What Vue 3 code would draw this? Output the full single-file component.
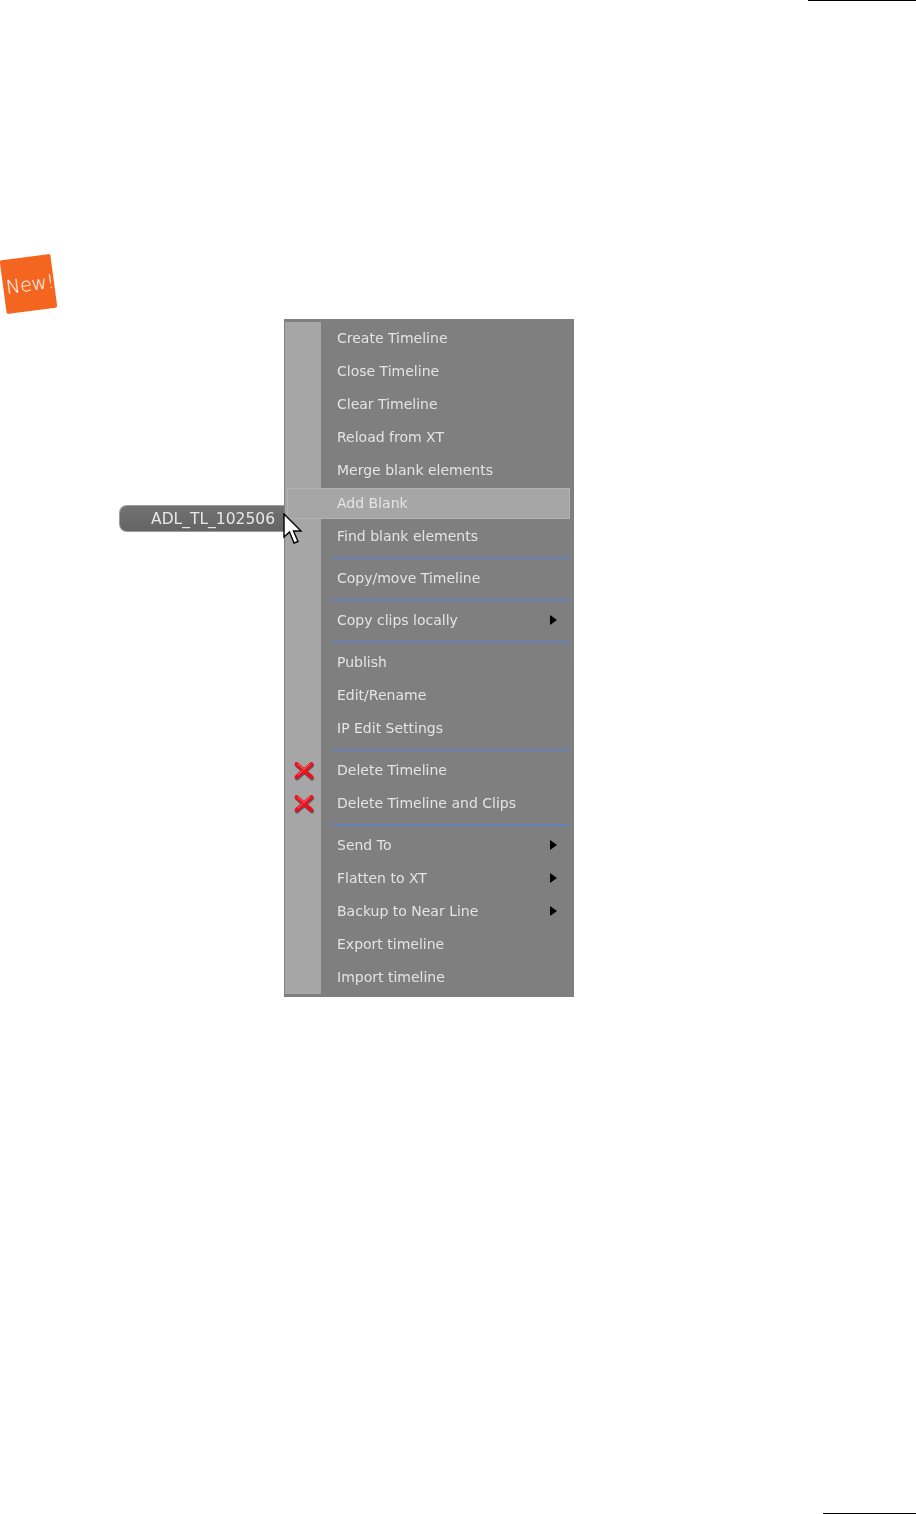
<template>
  <div class="page">
    <div class="rule rule-top"></div>

    <div class="new-badge"><span>New!</span></div>

    <div class="figure">
      <div class="timeline-pill">ADL_TL_102506</div>

      <div class="menu">
        <template v-for="(item, i) in menuItems" :key="i">
          <div v-if="item.sep" class="sep">
            <div class="gutter"></div>
            <div class="sep-line"></div>
          </div>
          <div v-else class="row" :class="{ active: item.active }">
            <div class="gutter">
              <svg v-if="item.del" class="del-icon" viewBox="0 0 22 20" width="22" height="20">
                <path d="M3.5 3.5 L18.5 16.5 M18.5 3.5 L3.5 16.5" stroke="#5c5860" stroke-width="4" stroke-linecap="round" transform="translate(0.5 1)"/>
                <path d="M3.5 3 L18.5 16 M18.5 3 L3.5 16" stroke="#ee0f1c" stroke-width="4" stroke-linecap="round"/>
                <path d="M5 3.4 L11 8.6 L17 3.2 M9.4 10 L5 14" stroke="#ff6a70" stroke-width="1" stroke-linecap="round" fill="none"/>
              </svg>
            </div>
            <div class="label">
              <span>{{ item.label }}</span>
              <i v-if="item.sub" class="arrow"></i>
            </div>
          </div>
        </template>
      </div>

      <svg class="cursor" viewBox="0 0 20 32" width="20" height="32">
        <path d="M1 1 L1 24 L6.5 19 L11 30 L15 28.5 L10.5 18 L18 18 Z" fill="#fff" stroke="#000" stroke-width="1.4" stroke-linejoin="miter"/>
      </svg>
    </div>

    <div class="rule rule-bottom"></div>
  </div>
</template>

<script setup>
const menuItems = [
  { label: 'Create Timeline' },
  { label: 'Close Timeline' },
  { label: 'Clear Timeline' },
  { label: 'Reload from XT' },
  { label: 'Merge blank elements' },
  { label: 'Add Blank', active: true },
  { label: 'Find blank elements' },
  { sep: true },
  { label: 'Copy/move Timeline' },
  { sep: true },
  { label: 'Copy clips locally', sub: true },
  { sep: true },
  { label: 'Publish' },
  { label: 'Edit/Rename' },
  { label: 'IP Edit Settings' },
  { sep: true },
  { label: 'Delete Timeline', del: true },
  { label: 'Delete Timeline and Clips', del: true },
  { sep: true },
  { label: 'Send To', sub: true },
  { label: 'Flatten to XT', sub: true },
  { label: 'Backup to Near Line', sub: true },
  { label: 'Export timeline' },
  { label: 'Import timeline' }
]
</script>

<style>
html, body {
  margin: 0;
  background: #fff;
}
</style>

<style scoped>
.page {
  width: 916px;
  height: 1514px;
  display: flex;
  flex-direction: column;
  font-family: "DejaVu Sans", sans-serif;
  overflow: hidden;
}

.rule {
  height: 1px;
  background: #000;
  align-self: flex-end;
}

.rule-top {
  width: 108px;
}

.rule-bottom {
  width: 93px;
  margin-top: auto;
}

.new-badge {
  width: 51px;
  height: 54px;
  box-sizing: border-box;
  padding-left: 3px;
  margin: 256px 0 0 3px;
  background: #f4661f;
  border-radius: 2px;
  transform: rotate(-7.6deg);
  display: flex;
  align-items: center;
  justify-content: center;
  color: #fff;
  font-size: 19px;
  font-weight: 200;
  letter-spacing: -0.2px;
}

.figure {
  display: flex;
  align-items: flex-start;
  margin: 8px 0 0 119px;
  position: relative;
  width: 455px;
  filter: blur(0.35px);
}

.timeline-pill {
  width: 165px;
  height: 27px;
  margin-top: 186px;
  box-sizing: border-box;
  padding-right: 9px;
  border: 1px solid #9c9c9c;
  border-right: 0;
  border-radius: 8px 0 0 8px;
  background: linear-gradient(#727272, #646464);
  color: #e8e8e8;
  font-size: 15.5px;
  line-height: 27px;
  text-align: right;
}

.menu {
  width: 290px;
  box-sizing: border-box;
  padding: 3px 0;
  background: #7f7f7f;
  color: #e4e4e4;
  font-size: 14px;
}

.row {
  display: flex;
  height: 33px;
}

.sep {
  display: flex;
  height: 9px;
}

.gutter {
  width: 36px;
  margin: 0 1px;
  flex: none;
  background: #a6a6a6;
  display: flex;
  align-items: center;
  justify-content: center;
}

.label {
  flex: 1;
  display: flex;
  align-items: center;
  padding: 0 0 2px 15px;
  position: relative;
}

.row.active .label {
  margin: 1px 4px 1px -35px;
  padding-left: 49px;
  background: #a6a6a6;
  border: 1px solid #b2b2b2;
}

.sep-line {
  flex: 1;
  height: 2px;
  margin: 4px 4px 0 11px;
  background: #6380bb;
}

.arrow {
  position: absolute;
  right: 17px;
  top: 11px;
  width: 0;
  height: 0;
  border-left: 7px solid #000;
  border-top: 5.5px solid transparent;
  border-bottom: 5.5px solid transparent;
}

.del-icon {
  margin-left: 1px;
}

.cursor {
  position: absolute;
  left: 164px;
  top: 194px;
}
</style>
